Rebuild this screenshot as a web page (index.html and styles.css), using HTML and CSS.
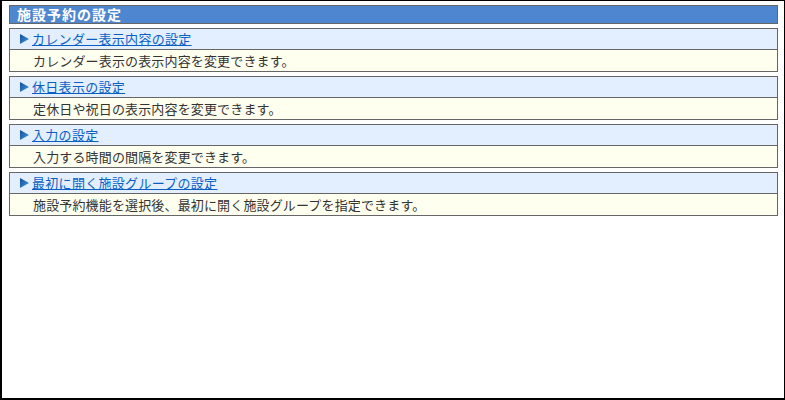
FILE: index.html
```html
<!DOCTYPE html>
<html lang="ja">
<head>
<meta charset="UTF-8">
<title>施設予約の設定</title>
<link rel="stylesheet" href="styles.css">
</head>
<body>

<div class="frame">
  <div class="heading">施設予約の設定</div>

  <div class="item">
    <div class="item-head">
      <svg class="arrow" width="9" height="10" viewBox="0 0 9 10"><defs><linearGradient id="g1" x1="0" y1="0" x2="1" y2="1"><stop offset="0" stop-color="#0c4f9e"/><stop offset="1" stop-color="#4b98dc"/></linearGradient></defs><polygon points="0,0 9,5 0,10" fill="url(#g1)"/></svg>
      <a href="#">カレンダー表示内容の設定</a>
    </div>
    <div class="item-body">カレンダー表示の表示内容を変更できます。</div>
  </div>

  <div class="item">
    <div class="item-head">
      <svg class="arrow" width="9" height="10" viewBox="0 0 9 10"><polygon points="0,0 9,5 0,10" fill="url(#g1)"/></svg>
      <a href="#">休日表示の設定</a>
    </div>
    <div class="item-body">定休日や祝日の表示内容を変更できます。</div>
  </div>

  <div class="item">
    <div class="item-head">
      <svg class="arrow" width="9" height="10" viewBox="0 0 9 10"><polygon points="0,0 9,5 0,10" fill="url(#g1)"/></svg>
      <a href="#">入力の設定</a>
    </div>
    <div class="item-body">入力する時間の間隔を変更できます。</div>
  </div>

  <div class="item">
    <div class="item-head">
      <svg class="arrow" width="9" height="10" viewBox="0 0 9 10"><polygon points="0,0 9,5 0,10" fill="url(#g1)"/></svg>
      <a href="#">最初に開く施設グループの設定</a>
    </div>
    <div class="item-body">施設予約機能を選択後、最初に開く施設グループを指定できます。</div>
  </div>
</div>

</body>
</html>
```

FILE: styles.css
```css
body, html {
  margin: 0;
  padding: 0;
  font-family: "Noto Sans CJK JP", "Noto Sans", sans-serif;
  font-size: 13px;
  color: #333;
}
.frame {
  width: 785px;
  height: 400px;
  box-sizing: border-box;
  border-style: solid;
  border-color: #000;
  border-width: 1px 1px 2px 2px;
  padding: 4px 6px 0 7px;
  background: #fff;
}
.heading {
  height: 17px;
  line-height: 17px;
  border: 1px solid #666;
  background: #4f86d0;
  color: #fff;
  font-weight: bold;
  font-size: 14px;
  letter-spacing: 1px;
  padding-left: 7px;
  margin-bottom: 4px;
}
.item {
  border: 1px solid #666;
  margin-bottom: 4px;
}
.item-head {
  height: 20px;
  line-height: 20px;
  background: #e3efff;
  border-bottom: 1px solid #666;
  display: flex;
  align-items: center;
  padding-left: 10px;
}
.arrow {
  margin-right: 3px;
}
.item-head a {
  color: #0a5fc4;
  text-decoration: underline;
  letter-spacing: 0.3px;
}
.item-body {
  height: 21px;
  line-height: 21px;
  background: #fffff0;
  padding-left: 23px;
  letter-spacing: 0.15px;
}
```
